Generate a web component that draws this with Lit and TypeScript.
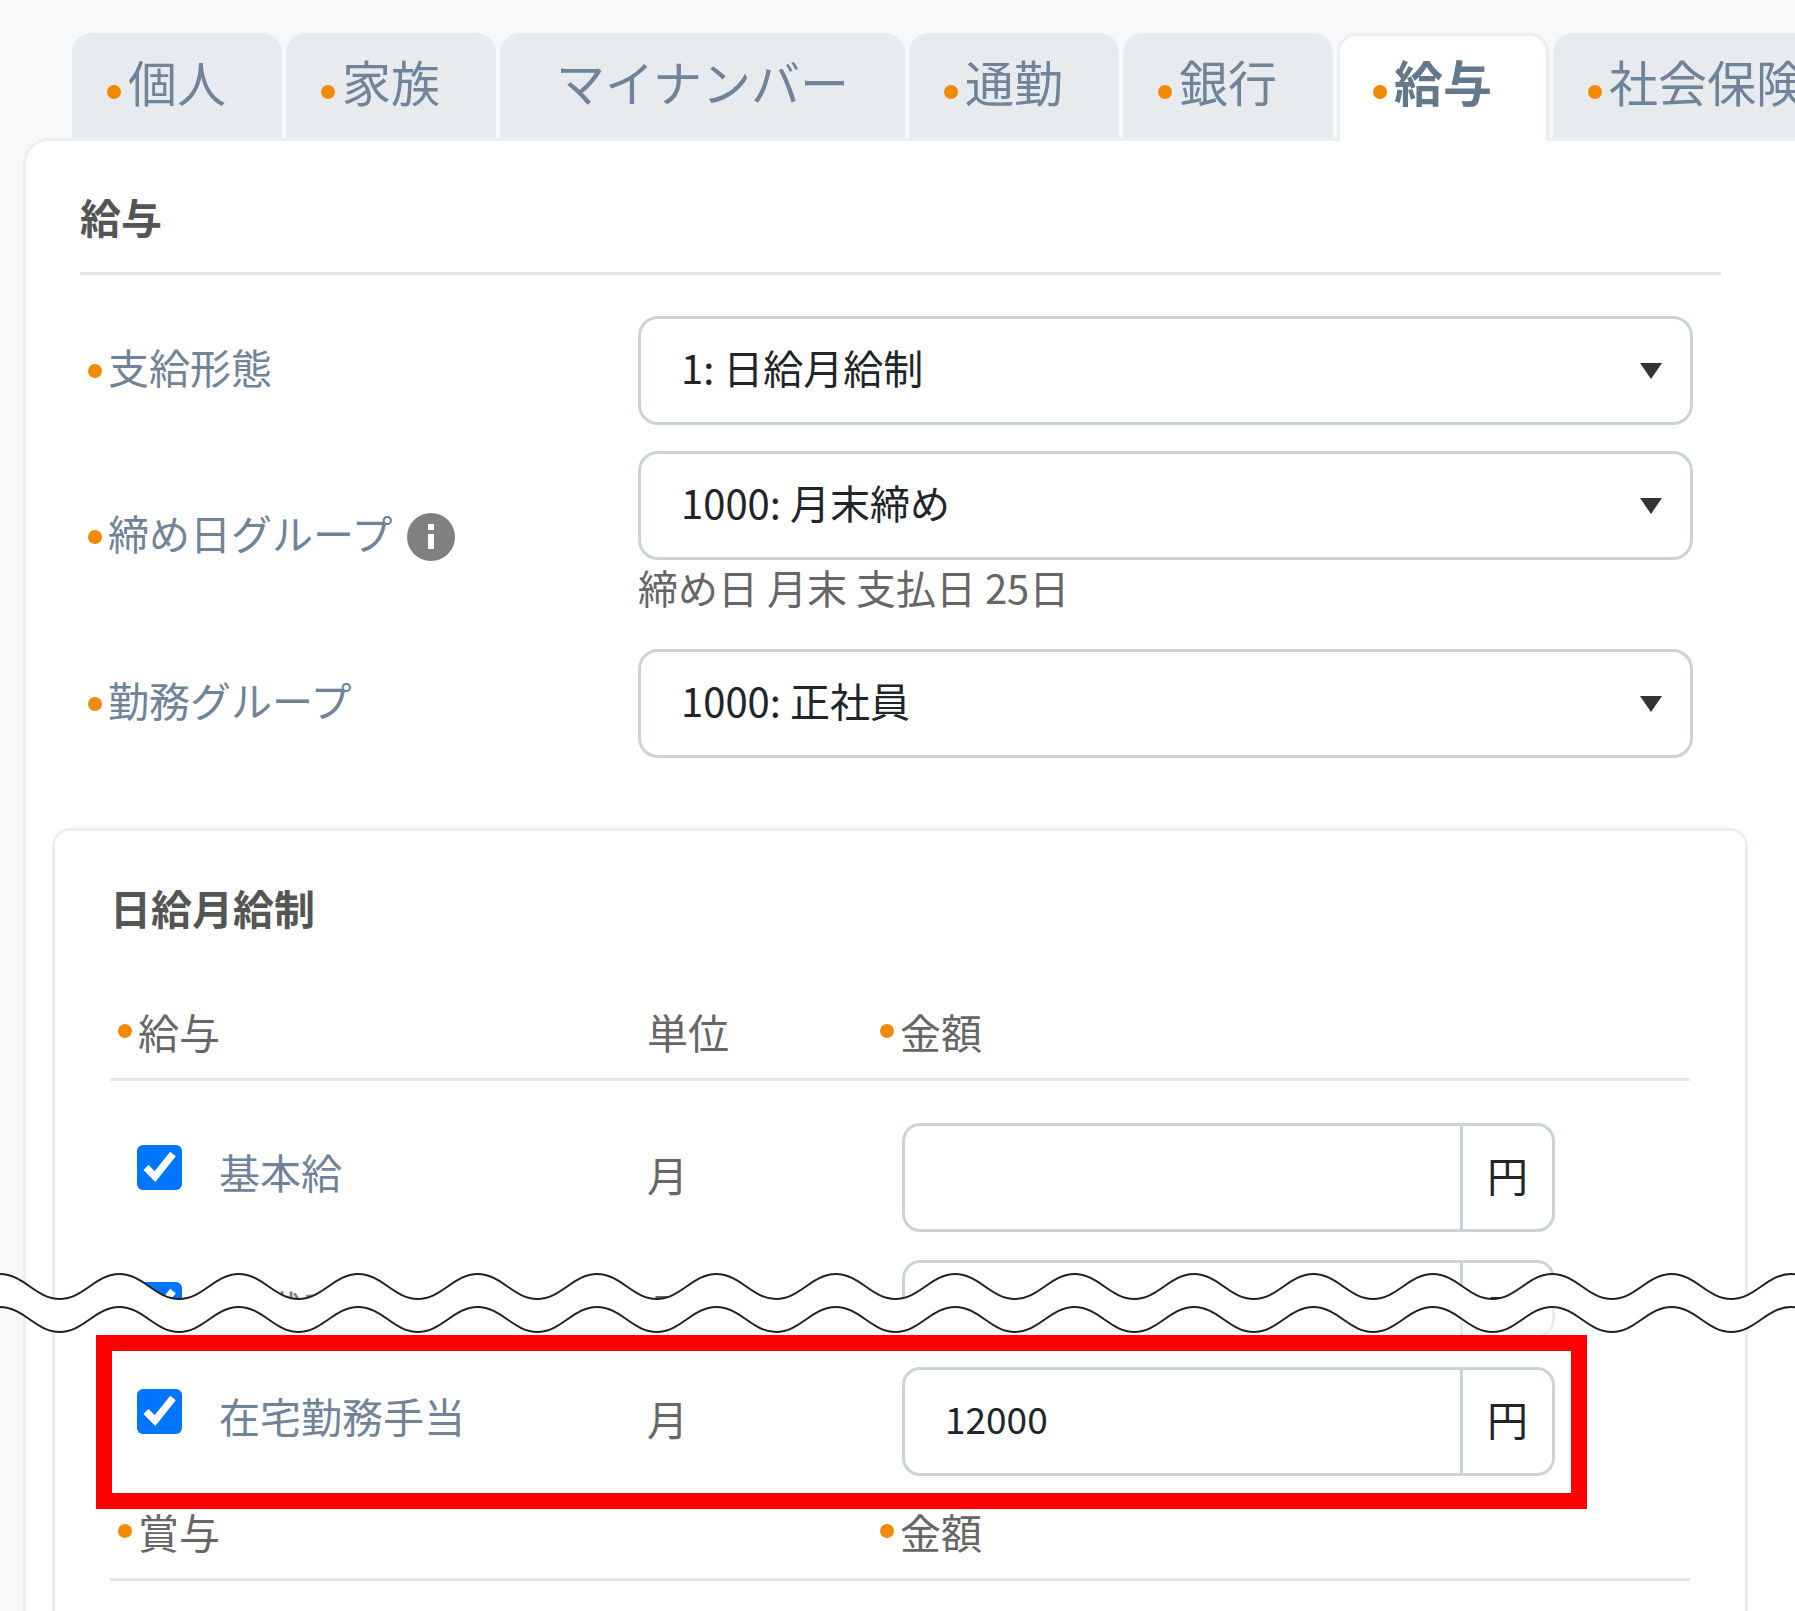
import { LitElement, html, css, svg } from "lit";
import { customElement, property, state } from "lit/decorators.js";
import { classMap } from "lit/directives/class-map.js";

interface Tab {
  label: string;
  dot: boolean;
}

interface PayItem {
  id: string;
  name: string;
  unit: string;
  amount: string;
  kind: "first" | "torn" | "marked";
}

const TABS: Tab[] = [
  { label: "個人", dot: true },
  { label: "家族", dot: true },
  { label: "マイナンバー", dot: false },
  { label: "通勤", dot: true },
  { label: "銀行", dot: true },
  { label: "給与", dot: true },
  { label: "社会保険", dot: true },
];

const ITEMS: PayItem[] = [
  { id: "base", name: "基本給", unit: "月", amount: "", kind: "first" },
  { id: "post", name: "役職手当", unit: "月", amount: "", kind: "torn" },
  { id: "remote", name: "在宅勤務手当", unit: "月", amount: "12000", kind: "marked" },
];

const PERIOD = 119.4;
const WAVES = 40;

/* One smooth wave running left to right, starting on a crest. */
function waveForward(crest: number, trough: number): string {
  const h = PERIOD / 2;
  let d = "";
  for (let i = 0; i < WAVES; i++) {
    const x = i * PERIOD;
    d += `C${x + h * 0.4} ${crest} ${x + h * 0.6} ${trough} ${x + h} ${trough}`;
    d += `C${x + h * 1.4} ${trough} ${x + h * 1.6} ${crest} ${x + PERIOD} ${crest}`;
  }
  return d;
}

/* The same wave from its right end back to the left. */
function waveBackward(crest: number, trough: number): string {
  const h = PERIOD / 2;
  let d = "";
  for (let i = WAVES; i > 0; i--) {
    const x = i * PERIOD;
    d += `C${x - h * 0.4} ${crest} ${x - h * 0.6} ${trough} ${x - h} ${trough}`;
    d += `C${x - h * 1.4} ${trough} ${x - h * 1.6} ${crest} ${x - PERIOD} ${crest}`;
  }
  return d;
}

const shared = css`
  *,
  *::before,
  *::after {
    box-sizing: border-box;
  }
  .dot {
    flex: none;
    width: 14px;
    height: 14px;
    border-radius: 50%;
    background: #f28a00;
  }
`;

@customElement("tear-line")
export class TearLine extends LitElement {
  static styles = css`
    :host {
      display: block;
    }
    .wave {
      display: block;
      width: 100%;
      height: 60px;
    }
  `;

  render() {
    const top = waveForward(2, 27);
    const bottom = waveForward(35, 60);
    const end = WAVES * PERIOD;
    return html`<svg class="wave" aria-hidden="true" overflow="visible">
      ${svg`
        <path fill="#fff" d="M0 2${top}L${end} 35${waveBackward(35, 60)}Z" />
        <path fill="none" stroke="#222" stroke-width="2" d="M0 2${top}" />
        <path fill="none" stroke="#222" stroke-width="2" d="M0 35${bottom}" />
      `}
    </svg>`;
  }
}

@customElement("select-field")
export class SelectField extends LitElement {
  @property() label = "";
  @property() value = "";
  @property() note = "";
  @property({ type: Boolean }) info = false;

  static styles = [
    shared,
    css`
      :host {
        display: grid;
        grid-template-columns: 550px minmax(0, 1fr);
        align-items: center;
      }
      .name {
        display: flex;
        align-items: center;
        gap: 6px;
        color: #708499;
        line-height: 60px;
      }
      .label {
        margin-bottom: 10px;
      }
      .info {
        display: flex;
        margin-left: 8px;
        padding: 0;
        border: 0;
        background: none;
      }
      .box {
        display: grid;
        align-items: center;
      }
      .select {
        grid-area: 1 / 1;
        width: 100%;
        height: 109px;
        padding: 0 80px 8px 40px;
        border: 3px solid #cbd3da;
        border-radius: 20px;
        background: #fff;
        color: #212529;
        font: inherit;
        font-size: 40px;
        appearance: none;
      }
      .arrow {
        grid-area: 1 / 1;
        justify-self: end;
        margin-right: 31px;
        pointer-events: none;
      }
      .note {
        margin: 0 0 8px;
        color: #666;
        font-size: 40px;
        line-height: 55px;
      }
    `,
  ];

  render() {
    return html`
      <div class="name">
        <span class="dot"></span>
        <label class="label" for="field">${this.label}</label>
        ${this.info
          ? html`<button class="info" type="button" aria-label=${this.label}>
              <svg width="48" height="48" viewBox="0 0 48 48" aria-hidden="true">
                <circle cx="24" cy="24" r="24" fill="#808080" />
                <rect x="21" y="11" width="6" height="6" fill="#fff" />
                <rect x="21" y="21" width="6" height="15" fill="#fff" />
              </svg>
            </button>`
          : null}
      </div>
      <div>
        <div class="box">
          <select class="select" id="field">
            <option>${this.value}</option>
          </select>
          <svg class="arrow" width="22" height="16" viewBox="0 0 22 16" aria-hidden="true">
            <path d="M0 0H22L11 16Z" fill="#333" />
          </svg>
        </div>
        ${this.note ? html`<p class="note">${this.note}</p>` : null}
      </div>
    `;
  }
}

@customElement("app-root")
export class AppRoot extends LitElement {
  @state() private active = 5;

  static styles = [
    shared,
    css`
      :host {
        display: flex;
        flex-direction: column;
        min-height: 100vh;
        overflow: clip;
        box-sizing: border-box;
        padding: 33px 0 0 23px;
        background: #f7f8fa;
        color: #666;
        font-family: "Noto Sans CJK JP", sans-serif;
        font-size: 41px;
      }
      .tabs {
        display: flex;
        gap: 4px;
        margin-left: 49px;
      }
      .tab {
        display: flex;
        flex: none;
        align-items: center;
        gap: 7px;
        height: 105px;
        padding: 0 56px 10px;
        border: 0;
        border-radius: 20px 20px 0 0;
        background: #e8ebee;
        color: #708499;
        font: inherit;
        font-size: 49px;
        line-height: 72px;
        white-space: nowrap;
      }
      .tab.dotted {
        padding-left: 35px;
      }
      .tab .dot {
        margin-top: 22px;
      }
      .tab.active {
        z-index: 1;
        height: 108px;
        margin-bottom: -3px;
        padding-right: 54px;
        padding-bottom: 16px;
        padding-left: 33px;
        border: 3px solid #eceff2;
        border-bottom: 0;
        background: #fff;
        color: #64788c;
        font-weight: 700;
      }
      .panel {
        display: flex;
        flex: 1;
        flex-direction: column;
        border: 3px solid #eceff2;
        border-right: 0;
        border-bottom: 0;
        border-top-left-radius: 26px;
        background: #fff;
      }
      .title {
        margin: 0;
        color: #555;
        font-size: 41px;
        font-weight: 700;
        line-height: 60px;
      }
      .lead {
        margin: 45px 74px 0 54px;
        padding-bottom: 26px;
        border-bottom: 3px solid #e3e6e9;
      }
      .fields {
        display: flex;
        flex-direction: column;
        gap: 26px;
        margin: 41px 102px 0 62px;
      }
      .card {
        display: flex;
        flex: 1;
        flex-direction: column;
        margin: 70px 47px 0 26px;
        padding: 46px 55px 0;
        border: 3px solid #eceef1;
        border-bottom: 0;
        border-radius: 18px 18px 0 0;
      }
      .grid {
        width: 100%;
        margin-top: 64px;
        border-collapse: separate;
        border-spacing: 0;
        table-layout: fixed;
      }
      .grid.next {
        margin-top: 11px;
      }
      .c1 {
        width: 537px;
      }
      .c2 {
        width: 233px;
      }
      .grid th {
        padding: 0 0 17px;
        border-bottom: 3px solid #e3e6e9;
        font-weight: 400;
        line-height: 60px;
        text-align: left;
      }
      .head {
        display: flex;
        align-items: center;
        gap: 6px;
      }
      .inset {
        padding-left: 8px;
      }
      .row {
        position: relative;
      }
      .grid td {
        padding: 14px 0;
        line-height: 60px;
        vertical-align: top;
      }
      .first td {
        padding-top: 42px;
      }
      .name {
        display: flex;
        align-items: flex-start;
        gap: 37px;
        padding-left: 27px;
        color: #708499;
      }
      .check {
        width: 45px;
        height: 45px;
        margin: 22px 0 0;
        accent-color: #0075ff;
        clip-path: inset(0 round 6px);
      }
      .name label {
        padding-top: 18px;
      }
      .unit {
        padding-top: 21px;
      }
      .money {
        display: flex;
        width: 653px;
        height: 109px;
        margin-left: 22px;
        overflow: hidden;
        border: 3px solid #cbd3da;
        border-radius: 18px;
        background: #fff;
        color: #212529;
      }
      .amount {
        flex: 1;
        min-width: 0;
        padding: 0 40px 8px;
        border: 0;
        background: none;
        color: inherit;
        font: inherit;
        font-size: 37px;
      }
      .yen {
        width: 92px;
        border-left: 3px solid #cbd3da;
        text-align: center;
      }
      .yen-text {
        display: block;
        padding-top: 18px;
      }
      .torn .name,
      .torn .unit,
      .torn .yen-text {
        height: 45px;
        overflow: hidden;
      }
      .torn .money {
        height: 78px;
        mask-image: linear-gradient(#000 60%, rgba(0, 0, 0, 0.4) 60%);
      }
      .torn td {
        padding-bottom: 15px;
      }
      .tear {
        position: absolute;
        z-index: 1;
        top: 26px;
        left: -110px;
        width: 100vw;
      }
      .marked td:first-child::after {
        content: "";
        position: absolute;
        z-index: 2;
        inset: -18px 103px -19px -14px;
        border: 16px solid #f00;
        pointer-events: none;
      }
    `,
  ];

  private renderItem(item: PayItem) {
    return html`<tr class="row ${item.kind}">
      <td>
        <div class="name">
          <input class="check" type="checkbox" id=${item.id} checked />
          <label for=${item.id}>${item.name}</label>
        </div>
        ${item.kind === "torn" ? html`<tear-line class="tear"></tear-line>` : null}
      </td>
      <td><div class="unit">${item.unit}</div></td>
      <td>
        <div class="money">
          <input class="amount" type="text" aria-label="${item.name} 金額" .value=${item.amount} />
          <span class="yen"><span class="yen-text">円</span></span>
        </div>
      </td>
    </tr>`;
  }

  render() {
    return html`
      <div class="tabs" role="tablist">
        ${TABS.map(
          (tab, i) => html`<button
            type="button"
            role="tab"
            aria-selected=${i === this.active ? "true" : "false"}
            class=${classMap({ tab: true, dotted: tab.dot, active: i === this.active })}
            @click=${() => (this.active = i)}
          >
            ${tab.dot ? html`<span class="dot"></span>` : null}<span>${tab.label}</span>
          </button>`
        )}
      </div>
      <main class="panel">
        <h1 class="title lead">給与</h1>
        <div class="fields">
          <select-field label="支給形態" value="1: 日給月給制"></select-field>
          <select-field
            label="締め日グループ"
            value="1000: 月末締め"
            note="締め日 月末 支払日 25日"
            info
          ></select-field>
          <select-field label="勤務グループ" value="1000: 正社員"></select-field>
        </div>
        <section class="card">
          <h2 class="title">日給月給制</h2>
          <table class="grid">
            <colgroup>
              <col class="c1" />
              <col class="c2" />
              <col />
            </colgroup>
            <thead>
              <tr>
                <th scope="col"><div class="head inset"><span class="dot"></span>給与</div></th>
                <th scope="col">単位</th>
                <th scope="col"><div class="head"><span class="dot"></span>金額</div></th>
              </tr>
            </thead>
            <tbody>
              ${ITEMS.map((item) => this.renderItem(item))}
            </tbody>
          </table>
          <table class="grid next">
            <colgroup>
              <col class="c1" />
              <col class="c2" />
              <col />
            </colgroup>
            <thead>
              <tr>
                <th scope="col" colspan="2">
                  <div class="head inset"><span class="dot"></span>賞与</div>
                </th>
                <th scope="col"><div class="head"><span class="dot"></span>金額</div></th>
              </tr>
            </thead>
          </table>
        </section>
      </main>
    `;
  }
}
